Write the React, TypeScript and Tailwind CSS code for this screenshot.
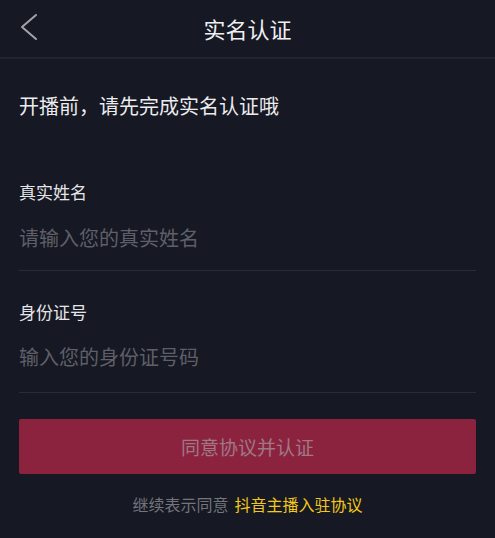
import React from "react";

export default function App() {
  const font = { fontFamily: '"Noto Sans CJK SC", "Noto Sans", sans-serif' };
  return (
    <div className="min-h-[538px] w-full bg-[#161823]" style={font}>
      <div className="relative flex h-[59px] items-center justify-center border-b-2 border-[#23242d]">
        <svg className="absolute left-[19px] top-[12px]" width="20" height="30" viewBox="0 0 20 30">
          <polyline points="17,3 3,15 17,27" fill="none" stroke="#a3a3a8" strokeWidth="2" strokeLinecap="round" strokeLinejoin="round" />
        </svg>
        <div className="text-[22px] leading-[30px] text-[#f0f0f2] mt-[-2px]">实名认证</div>
      </div>
      <div className="px-[19px]">
        <div className="pt-[33px] text-[20px] leading-[28px] text-[#ececee]">开播前，请先完成实名认证哦</div>
        <div className="mt-[60px] text-[17px] leading-[24px] text-[#e6e6e9]">真实姓名</div>
        <input
          className="mt-[20px] block h-[28px] w-full bg-transparent text-[20px] leading-[28px] text-[#e6e6e9] outline-none placeholder:text-[#5e5f68]"
          placeholder="请输入您的真实姓名"
        />
        <div className="mt-[18px] h-px bg-[#2a2b34]" />
        <div className="mt-[29px] text-[17px] leading-[24px] text-[#e6e6e9]">身份证号</div>
        <input
          className="mt-[19px] block h-[28px] w-full bg-transparent text-[20px] leading-[28px] text-[#e6e6e9] outline-none placeholder:text-[#5e5f68]"
          placeholder="输入您的身份证号码"
        />
        <div className="mt-[21px] h-px bg-[#2a2b34]" />
        <button className="mt-[26px] flex h-[55px] w-full items-center justify-center rounded-[2px] bg-[#8b233f] text-[19px] leading-[28px] text-[#a07885]">
          同意协议并认证
        </button>
        <div className="mt-[18px] flex justify-center text-[16px] leading-[24px]">
          <span className="text-[#73747c]">继续表示同意</span>
          <span className="ml-[6px] text-[#f2c81b]">抖音主播入驻协议</span>
        </div>
      </div>
    </div>
  );
}
